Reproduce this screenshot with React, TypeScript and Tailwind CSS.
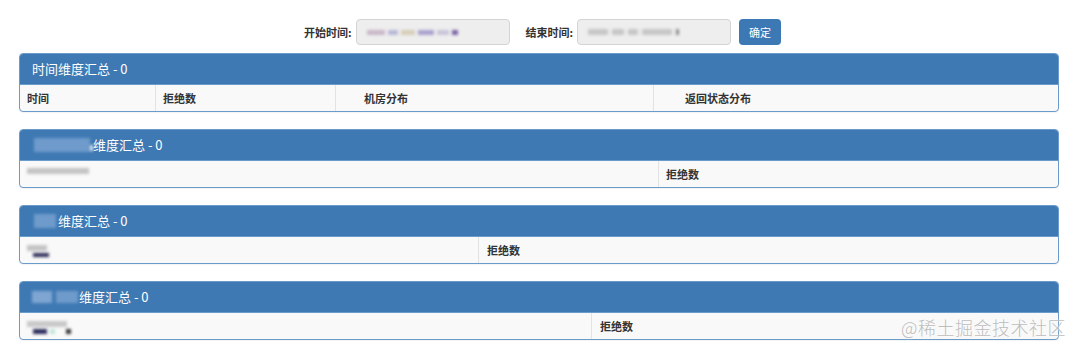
const FONT = "font-['Microsoft_YaHei','Noto_Sans_CJK_SC','Liberation_Sans',sans-serif]";

type Col = { label?: string; width: string; pad?: string; blur?: React.ReactNode };

const Blur = ({ w, h, c, className = '' }: { w: string; h: string; c: string; className?: string }) => (
  <span className={`inline-block ${w} ${h} ${c} blur-[1.5px] ${className}`} />
);

function Panel({ title, prefix, cols }: { title: string; prefix?: React.ReactNode; cols: Col[] }) {
  return (
    <div className="h-[59px] border border-[#6b9bcb] rounded-[4px] overflow-hidden bg-[#f9f9f9] shadow-[0_1px_1px_rgba(0,0,0,0.05)]">
      <div className="h-[30px] bg-[#3f79b3] flex items-center pl-[12px] text-white text-[13px]">
        {prefix}
        <span>{title}</span>
      </div>
      <div className="h-[27px] flex border-t border-[#6b9bcb]">
        {cols.map((c, i) => (
          <div
            key={i}
            className={`${c.width} h-full flex items-center ${c.pad ?? 'pl-[7px]'} text-[11px] font-bold text-[#333] ${i > 0 ? 'border-l border-[#e3e3e3]' : ''}`}
          >
            {c.blur ?? c.label}
          </div>
        ))}
      </div>
    </div>
  );
}

export default function App() {
  return (
    <div className={`relative w-[1080px] h-[353px] bg-white overflow-hidden ${FONT}`}>
      {/* search bar */}
      <div className="flex items-center justify-center pt-[19px] pl-[5px] text-[11px] font-bold text-[#333]">
        <span>开始时间:</span>
        <div className="ml-[4px] w-[154px] h-[26px] bg-[#eeeeee] border border-[#d4d4d4] rounded-[4px] flex items-center gap-[3px] pl-[10px]">
          <Blur w="w-[18px]" h="h-[5px]" c="bg-[#c9b7c8]" />
          <Blur w="w-[10px]" h="h-[5px]" c="bg-[#b8b8d8]" />
          <Blur w="w-[14px]" h="h-[5px]" c="bg-[#d6cdb8]" />
          <Blur w="w-[16px]" h="h-[5px]" c="bg-[#a9a0cc]" />
          <Blur w="w-[12px]" h="h-[5px]" c="bg-[#c9c3d8]" />
          <Blur w="w-[6px]" h="h-[5px]" c="bg-[#7a62a8]" />
        </div>
        <span className="ml-[16px]">结束时间:</span>
        <div className="ml-[4px] w-[154px] h-[26px] bg-[#eeeeee] border border-[#d4d4d4] rounded-[4px] flex items-center gap-[4px] pl-[10px]">
          <Blur w="w-[20px]" h="h-[6px]" c="bg-[#c6c6c6]" />
          <Blur w="w-[12px]" h="h-[6px]" c="bg-[#c6c6c6]" />
          <Blur w="w-[10px]" h="h-[6px]" c="bg-[#c6c6c6]" />
          <Blur w="w-[30px]" h="h-[6px]" c="bg-[#c6c6c6]" />
          <Blur w="w-[3px]" h="h-[6px]" c="bg-[#888]" />
        </div>
        <button className="ml-[8px] w-[42px] h-[26px] bg-[#3c78b4] rounded-[4px] text-white text-[11px] font-normal">
          确定
        </button>
      </div>

      {/* panels */}
      <div className="mt-[8px] ml-[19px] w-[1040px] flex flex-col gap-[17px]">
        <Panel
          title="时间维度汇总 - 0"
          cols={[
            { label: '时间', width: 'w-[135px]' },
            { label: '拒绝数', width: 'w-[180px]' },
            { label: '机房分布', width: 'w-[318px]', pad: 'pl-[28px]' },
            { label: '返回状态分布', width: 'flex-1', pad: 'pl-[31px]' },
          ]}
        />
        <Panel
          title="维度汇总 - 0"
          prefix={
            <>
              <Blur w="w-[56px]" h="h-[14px]" c="bg-[#6f9bcc]" className="ml-[2px]" />
              <Blur w="w-[3px]" h="h-[6px]" c="bg-[#e8eef6]" className="mt-[6px]" />
            </>
          }
          cols={[
            { width: 'w-[638px]', blur: <Blur w="w-[62px]" h="h-[6px]" c="bg-[#c4c4c4]" className="mb-[6px]" /> },
            { label: '拒绝数', width: 'flex-1', pad: 'pl-[7px]' },
          ]}
        />
        <Panel
          title="维度汇总 - 0"
          prefix={<Blur w="w-[22px]" h="h-[14px]" c="bg-[#6f9bcc]" className="ml-[2px] mr-[2px]" />}
          cols={[
            {
              width: 'w-[458px]',
              blur: (
                <span className="flex flex-col gap-[2px] mt-[2px]">
                  <Blur w="w-[20px]" h="h-[6px]" c="bg-[#c4c4c4]" />
                  <Blur w="w-[16px]" h="h-[4px]" c="bg-[#2e2c58]" className="ml-[6px]" />
                </span>
              ),
            },
            { label: '拒绝数', width: 'flex-1', pad: 'pl-[8px]' },
          ]}
        />
        <Panel
          title="维度汇总 - 0"
          prefix={
            <span className="flex gap-[4px] mr-[1px]">
              <Blur w="w-[20px]" h="h-[12px]" c="bg-[#7fa6d2]" />
              <Blur w="w-[22px]" h="h-[12px]" c="bg-[#6f9bcc]" />
            </span>
          }
          cols={[
            {
              width: 'w-[571px]',
              blur: (
                <span className="flex flex-col gap-[2px] mt-[2px]">
                  <Blur w="w-[40px]" h="h-[6px]" c="bg-[#c8c8c8]" />
                  <span className="flex gap-[3px] ml-[6px]">
                    <Blur w="w-[14px]" h="h-[5px]" c="bg-[#2a2a5a]" />
                    <Blur w="w-[5px]" h="h-[5px]" c="bg-[#bfe5d8]" />
                    <Blur w="w-[5px]" h="h-[5px]" c="bg-[#333]" className="ml-[8px]" />
                  </span>
                </span>
              ),
            },
            { label: '拒绝数', width: 'flex-1', pad: 'pl-[8px]' },
          ]}
        />
      </div>

      {/* watermark */}
      <div className="absolute right-[14px] bottom-[12px] text-[18px] text-[#bdbdbd] font-light tracking-[0.5px] [text-shadow:0_0_2px_#fff]">
        @稀土掘金技术社区
      </div>
    </div>
  );
}
